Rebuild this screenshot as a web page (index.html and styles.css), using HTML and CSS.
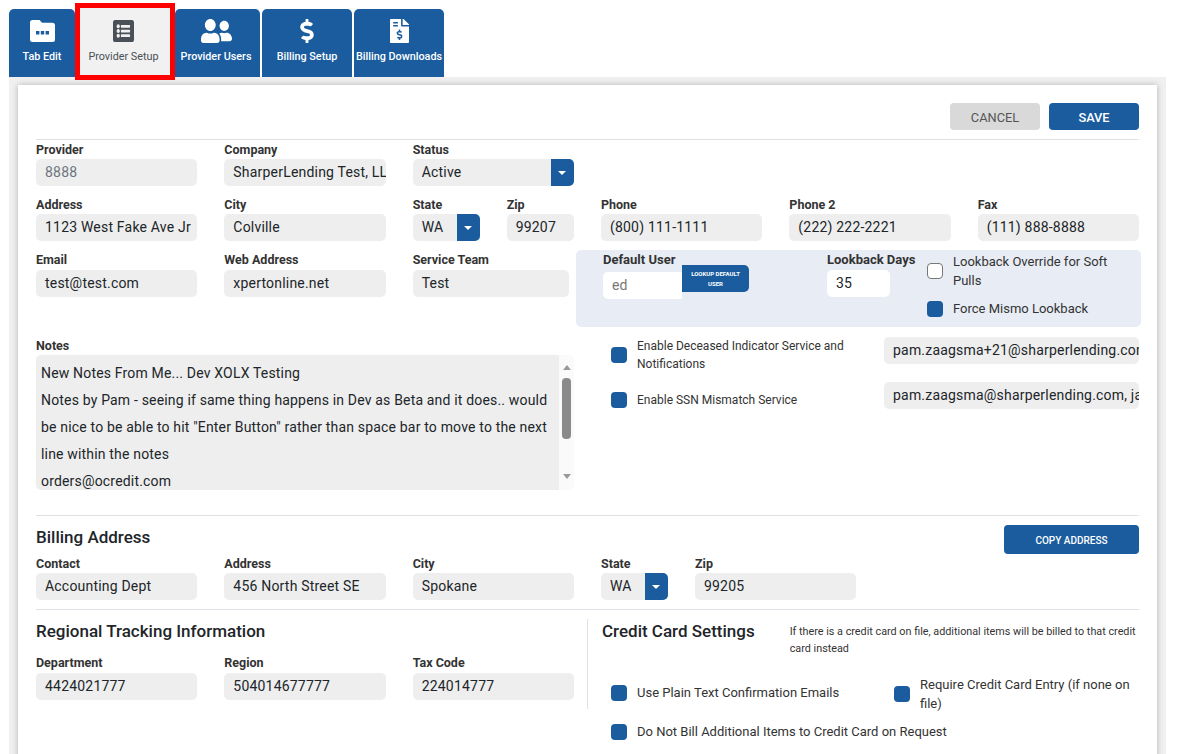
FILE: index.html
```html
<!DOCTYPE html>
<html lang="en">
<head>
  <meta charset="UTF-8" />
  <meta name="viewport" content="width=device-width, initial-scale=1.0"/>
  <title>Provider Setup</title>
  <link rel="stylesheet" href="styles.css">
</head>
<body>

  <nav class="tabs">
    <a class="tab tab-edit">
      <svg class="tab-icon" viewBox="0 0 25 22" width="25" height="24"><path fill-rule="evenodd" d="M2.5 0h7l2.6 2.8h10.4A2.5 2.5 0 0 1 25 5.300v14.200a2.500 2.500 0 0 1-2.500 2.500h-20A2.500 2.500 0 0 1 0 19.500v-17A2.500 2.500 0 0 1 2.500 0zM6 11v3.400h3.400V11zm4.800 0v3.400h3.400V11zm4.800 0v3.400H19V11z"/></svg>
      <span>Tab Edit</span>
    </a>
    <a class="tab tab-active">
      <svg class="tab-icon" viewBox="0 32 512 448" width="21" height="22" preserveAspectRatio="none"><path d="M464 480H48c-26.51 0-48-21.49-48-48V80c0-26.51 21.49-48 48-48h416c26.51 0 48 21.49 48 48v352c0 26.51-21.49 48-48 48zM128 120c-22.091 0-40 17.909-40 40s17.909 40 40 40 40-17.909 40-40-17.909-40-40-40zm0 96c-22.091 0-40 17.909-40 40s17.909 40 40 40 40-17.909 40-40-17.909-40-40-40zm0 96c-22.091 0-40 17.909-40 40s17.909 40 40 40 40-17.909 40-40-17.909-40-40-40zm288-136v-32c0-6.627-5.373-12-12-12H204c-6.627 0-12 5.373-12 12v32c0 6.627 5.373 12 12 12h200c6.627 0 12-5.373 12-12zm0 96v-32c0-6.627-5.373-12-12-12H204c-6.627 0-12 5.373-12 12v32c0 6.627 5.373 12 12 12h200c6.627 0 12-5.373 12-12zm0 96v-32c0-6.627-5.373-12-12-12H204c-6.627 0-12 5.373-12 12v32c0 6.627 5.373 12 12 12h200c6.627 0 12-5.373 12-12z"/></svg>
      <span>Provider Setup</span>
    </a>
    <a class="tab tab-users">
      <svg class="tab-icon" viewBox="0 32 640 448" width="31" height="24" preserveAspectRatio="none"><path d="M192 256c61.9 0 112-50.100 112-112S253.900 32 192 32 80 82.100 80 144s50.100 112 112 112zm76.800 32h-8.300c-20.800 10-43.900 16-68.500 16s-47.600-6-68.500-16h-8.300C51.600 288 0 339.600 0 403.200V432c0 26.500 21.500 48 48 48h288c26.500 0 48-21.500 48-48v-28.800c0-63.600-51.600-115.200-115.200-115.200zM480 256c53 0 96-43 96-96s-43-96-96-96-96 43-96 96 43 96 96 96zm48 32h-3.800c-13.900 4.800-28.600 8-44.200 8s-30.300-3.200-44.200-8H432c-20.400 0-39.200 5.900-55.700 15.400 24.400 26.300 39.700 61.200 39.700 99.800v38.400c0 2.200-.5 4.300-.6 6.400H592c26.500 0 48-21.500 48-48 0-61.900-50.100-112-112-112z"/></svg>
      <span>Provider Users</span>
    </a>
    <a class="tab tab-wide">
      <svg class="tab-icon" viewBox="0 0 288 512" width="14" height="24"><path d="M209.200 233.400l-108-31.600C88.700 198.200 80 186.500 80 173.500c0-16.300 13.200-29.500 29.500-29.500h66.300c12.200 0 24.200 3.700 34.200 10.500 6.100 4.100 14.300 3.100 19.500-2l34.800-34c7.100-6.900 6.100-18.400-1.800-24.500C238 74.800 207.400 64.100 176 64V16c0-8.800-7.200-16-16-16h-32c-8.800 0-16 7.200-16 16v48h-2.500C45.800 64-5.400 118.700.5 183.600c4.200 46.100 39.400 83.600 83.800 96.600l102.500 30c12.500 3.700 21.200 15.300 21.200 28.300 0 16.300-13.200 29.500-29.500 29.500h-66.300C100 368 88 364.300 78 357.500c-6.100-4.100-14.300-3.100-19.500 2l-34.800 34c-7.100 6.900-6.100 18.400 1.800 24.500 24.500 19.200 55.100 29.900 86.500 30v48c0 8.800 7.200 16 16 16h32c8.800 0 16-7.200 16-16v-48.200c46.600-.9 90.300-28.600 105.700-72.700 21.500-61.600-14.600-124.800-72.500-141.700z"/></svg>
      <span>Billing Setup</span>
    </a>
    <a class="tab tab-wide">
      <svg class="tab-icon" viewBox="0 0 384 512" width="19" height="24" preserveAspectRatio="none"><path d="M377 105L279.100 7c-4.500-4.500-10.600-7-17-7H256v128h128v-6.100c0-6.300-2.500-12.400-7-16.900zm-153 31V0H24C10.700 0 0 10.700 0 24v464c0 13.300 10.700 24 24 24h336c13.300 0 24-10.700 24-24V160H248c-13.200 0-24-10.800-24-24zM64 72c0-4.420 3.580-8 8-8h80c4.420 0 8 3.580 8 8v16c0 4.420-3.580 8-8 8H72c-4.420 0-8-3.580-8-8V72zm0 80v-16c0-4.420 3.580-8 8-8h80c4.420 0 8 3.580 8 8v16c0 4.420-3.580 8-8 8H72c-4.420 0-8-3.580-8-8zm144 263.880V440c0 4.420-3.580 8-8 8h-16c-4.420 0-8-3.580-8-8v-24.290c-11.290-.58-22.270-4.520-31.370-11.350-3.900-2.930-4.100-8.770-.57-12.140l11.750-11.210c2.770-2.640 6.890-2.760 10.130-.73 3.870 2.420 8.260 3.720 12.820 3.720h28.110c6.500 0 11.800-5.920 11.800-13.190 0-5.950-3.610-11.190-8.770-12.730l-45-13.500c-18.590-5.580-31.580-23.420-31.580-43.390 0-24.520 19.050-44.440 42.670-45.070V232c0-4.420 3.580-8 8-8h16c4.420 0 8 3.580 8 8v24.290c11.290.58 22.270 4.510 31.370 11.350 3.900 2.930 4.100 8.770.57 12.140l-11.750 11.210c-2.770 2.640-6.890 2.760-10.130.73-3.870-2.430-8.260-3.720-12.820-3.720h-28.110c-6.500 0-11.800 5.920-11.800 13.190 0 5.950 3.610 11.190 8.770 12.730l45 13.500c18.590 5.580 31.580 23.420 31.580 43.390 0 24.530-19.050 44.440-42.670 45.070z"/></svg>
      <span>Billing Downloads</span>
    </a>
  </nav>

  <div class="panel">
    <div class="card">

      <div class="actions">
        <button class="btn btn-cancel">CANCEL</button>
        <button class="btn btn-save">SAVE</button>
      </div>

      <div class="grid grid-top">
        <div class="group"><label>Provider</label><div class="field field-muted">8888</div></div>
        <div class="group"><label>Company</label><div class="field">SharperLending Test, LLC</div></div>
        <div class="group">
          <label>Status</label>
          <div class="select"><span>Active</span><i class="caret"></i></div>
        </div>
      </div>

      <div class="grid">
        <div class="group"><label>Address</label><div class="field">1123 West Fake Ave Jr</div></div>
        <div class="group"><label>City</label><div class="field">Colville</div></div>
        <div class="pair">
          <div class="group"><label>State</label><div class="select"><span>WA</span><i class="caret"></i></div></div>
          <div class="group"><label>Zip</label><div class="field">99207</div></div>
        </div>
        <div class="group"><label>Phone</label><div class="field">(800) 111-1111</div></div>
        <div class="group"><label>Phone 2</label><div class="field">(222) 222-2221</div></div>
        <div class="group"><label>Fax</label><div class="field">(111) 888-8888</div></div>
      </div>

      <div class="grid grid-third">
        <div class="group"><label>Email</label><div class="field">test@test.com</div></div>
        <div class="group"><label>Web Address</label><div class="field">xpertonline.net</div></div>
        <div class="group group-team"><label>Service Team</label><div class="field">Test</div></div>
        <div class="lookback">
          <div class="group default-user">
            <label>Default User</label>
            <div class="lookup">
              <div class="field field-white field-grey-text">ed</div>
              <button class="lookup-btn">LOOKUP DEFAULT USER</button>
            </div>
          </div>
          <div class="group lookback-days">
            <label>Lookback Days</label>
            <div class="field field-white">35</div>
          </div>
          <div class="lookback-checks">
            <div class="check"><i class="box box-empty"></i><span>Lookback Override for Soft Pulls</span></div>
            <div class="check"><i class="box"></i><span>Force Mismo Lookback</span></div>
          </div>
        </div>
      </div>

      <div class="notes-row">
        <div class="group notes">
          <label>Notes</label>
          <div class="notes-box">
            <div class="notes-text">
              <p>New Notes From Me... Dev XOLX Testing</p>
              <p>Notes by Pam - seeing if same thing happens in Dev as Beta and it does.. would be nice to be able to hit "Enter Button" rather than space bar to move to the next line within the notes</p>
              <p>orders@ocredit.com</p>
            </div>
            <div class="scrollbar">
              <i class="arrow-up"></i>
              <i class="thumb"></i>
              <i class="arrow-down"></i>
            </div>
          </div>
        </div>
        <div class="services">
          <div class="service">
            <div class="check check-small"><i class="box"></i><span>Enable Deceased Indicator Service and Notifications</span></div>
            <div class="field">pam.zaagsma+21@sharperlending.com</div>
          </div>
          <div class="service">
            <div class="check check-small"><i class="box"></i><span>Enable SSN Mismatch Service</span></div>
            <div class="field">pam.zaagsma@sharperlending.com, jane.doe@sharperlending.com</div>
          </div>
        </div>
      </div>

      <section class="billing">
        <div class="billing-head">
          <h2>Billing Address</h2>
          <button class="btn btn-copy">COPY ADDRESS</button>
        </div>
        <div class="grid">
          <div class="group"><label>Contact</label><div class="field">Accounting Dept</div></div>
          <div class="group"><label>Address</label><div class="field">456 North Street SE</div></div>
          <div class="group"><label>City</label><div class="field">Spokane</div></div>
          <div class="pair">
            <div class="group"><label>State</label><div class="select"><span>WA</span><i class="caret"></i></div></div>
            <div class="group group-zip"><label>Zip</label><div class="field">99205</div></div>
          </div>
        </div>
      </section>

      <section class="bottom">
        <div class="regional">
          <h2>Regional Tracking Information</h2>
          <div class="regional-grid">
            <div class="group"><label>Department</label><div class="field">4424021777</div></div>
            <div class="group"><label>Region</label><div class="field">504014677777</div></div>
            <div class="group"><label>Tax Code</label><div class="field">224014777</div></div>
          </div>
        </div>
        <div class="credit">
          <div class="credit-head">
            <h2>Credit Card Settings</h2>
            <p>If there is a credit card on file, additional items will be billed to that credit card instead</p>
          </div>
          <div class="credit-checks">
            <div class="check"><i class="box"></i><span>Use Plain Text Confirmation Emails</span></div>
            <div class="check"><i class="box"></i><span>Require Credit Card Entry (if none on file)</span></div>
            <div class="check check-wide"><i class="box"></i><span>Do Not Bill Additional Items to Credit Card on Request</span></div>
          </div>
        </div>
      </section>

    </div>
  </div>

</body>
</html>
```

FILE: styles.css
```css
* {
  box-sizing: border-box;
}

body {
  margin: 0;
  height: 754px;
  overflow: hidden;
  background: #fff;
  font-family: 'Roboto', sans-serif;
  color: #212529;
}

/* Tabs */
.tabs {
  display: flex;
  padding: 9px 0 0 9px;
  height: 77px;
}

.tab {
  display: flex;
  flex-direction: column;
  align-items: center;
  width: 90px;
  margin-right: 2px;
  background: #1a5c9e;
  color: #fff;
  border-radius: 5px 5px 0 0;
  font-size: 10.800px;
  font-weight: 500;
  white-space: nowrap;
}

.tab svg {
  fill: #fff;
}

.tab-icon {
  margin-top: 10px;
  height: 24px;
}

.tab span {
  margin-top: 7px;
}

.tab-edit {
  width: 66px;
  margin-right: 0;
}

.tab-users {
  width: 85px;
  padding-right: 3px;
}

.tab-active {
  position: relative;
  width: 100px;
  margin: -6px 0 -3px;
  padding-right: 3px;
  background: #f1f1f1;
  border: 5px solid #f00;
  border-radius: 0;
  color: #495057;
  font-weight: 400;
  z-index: 1;
}

.tab-active svg {
  fill: #495057;
  height: 22px;
  margin-top: 12px;
}

.tab-active span {
  margin-top: 8px;
}

/* Panel */
.panel {
  margin: 0 11px 0 9px;
  height: 677px;
  padding: 8px 9px 0;
  background: #f0f0f0;
}

.card {
  height: 700px;
  padding: 18px 18px 0;
  background: #fff;
  box-shadow: 0 0 6px rgba(0, 0, 0, 0.25);
}

.actions {
  display: flex;
  justify-content: flex-end;
  gap: 9px;
  height: 37px;
  border-bottom: 1px solid #dee2e6;
}

.btn {
  height: 27px;
  width: 90px;
  padding: 1px 0 0;
  border: none;
  border-radius: 4px;
  font-family: 'Roboto', sans-serif;
  font-size: 12.800px;
  font-weight: 500;
  color: #fff;
  background: #1a5c9e;
}

.btn-cancel {
  background: #d9d9d9;
  color: #555;
  font-weight: 400;
}

/* Fields */
.grid {
  display: grid;
  grid-template-columns: repeat(6, 1fr);
  column-gap: 27px;
  height: 55px;
}

.grid-top {
  margin-top: 2px;
}

.group {
  display: flex;
  flex-direction: column;
  min-width: 0;
}

.group label {
  font-size: 12.500px;
  font-weight: 700;
  line-height: 16px;
  margin-bottom: 1px;
  color: #333;
}

.field {
  height: 27px;
  padding: 0 9px;
  border-radius: 5px;
  background: #eee;
  font-size: 14px;
  letter-spacing: 0.2px;
  line-height: 27px;
  color: #212529;
  white-space: nowrap;
  overflow: hidden;
}

.field-muted {
  color: #6c757d;
}

.field-white {
  background: #fff;
}

.field-grey-text {
  color: #777;
}

.select {
  display: flex;
  justify-content: space-between;
  height: 27px;
  padding-left: 9px;
  border-radius: 5px;
  background: #eee;
  font-size: 14px;
  letter-spacing: 0.2px;
  line-height: 27px;
  overflow: hidden;
}

.caret {
  position: relative;
  width: 23px;
  background: #1a5c9e;
}

.caret::after {
  content: '';
  position: absolute;
  left: 7px;
  top: 12px;
  border-style: solid;
  border-width: 4px 4px 0;
  border-color: #fff transparent transparent;
}

.pair {
  display: grid;
  grid-template-columns: 67px 67px;
  column-gap: 27px;
}

/* Lookback box */
.grid-third {
  height: 76px;
}

.grid-third > .group label {
  margin-bottom: 2px;
}

.grid-third .group-team {
  width: 156px;
}

.lookback {
  grid-column: 4 / 7;
  display: flex;
  height: 77px;
  margin: -2px -2px 0 -25px;
  padding: 2px 8px 0 27px;
  border-radius: 5px;
  background: #e8edf5;
}

.lookback .group label {
  font-size: 13px;
}

.default-user {
  width: 224px;
}

.lookup {
  display: flex;
  align-items: flex-start;
  margin-top: 3px;
}

.lookup .field {
  width: 79px;
  flex: none;
  border-radius: 5px 0 0 5px;
}

.lookup-btn {
  width: 67px;
  height: 27px;
  margin-top: -7px;
  padding: 0 4px;
  border: none;
  border-radius: 0 5px 5px 0;
  background: #1a5c9e;
  color: #fff;
  font-family: 'Roboto', sans-serif;
  font-size: 6px;
  font-weight: 700;
  line-height: 10px;
}

.lookback-days {
  width: 100px;
  white-space: nowrap;
}

.lookback-days .field {
  width: 63px;
  margin-top: 1px;
}

.lookback-checks {
  display: flex;
  flex-direction: column;
  gap: 9px;
  flex: 1;
}

.check {
  display: flex;
  align-items: center;
  font-size: 13px;
  line-height: 19px;
  color: #333;
}

.check span {
  margin-left: 10px;
}

.box {
  flex: none;
  width: 16px;
  height: 16px;
  border-radius: 4px;
  background: #1a5c9e;
}

.box-empty {
  background: #fff;
  border: 1px solid #777;
}

/* Notes */
.notes-row {
  display: grid;
  grid-template-columns: 538px 1fr;
  column-gap: 37px;
  margin-top: 10px;
  padding-bottom: 25px;
  border-bottom: 1px solid #dee2e6;
}

.notes-box {
  display: flex;
  height: 135px;
  border-radius: 5px;
  overflow: hidden;
}

.notes-text {
  flex: 1;
  padding: 5px;
  background: #eee;
  font-size: 14px;
  letter-spacing: 0.175px;
  line-height: 27px;
  overflow: hidden;
}

.notes-text p {
  margin: 0;
}

.scrollbar {
  display: flex;
  flex-direction: column;
  align-items: center;
  flex: none;
  width: 15px;
  background: #fafafa;
}

.arrow-up {
  margin-top: 10px;
  border-style: solid;
  border-width: 0 4px 5px;
  border-color: transparent transparent #999;
}

.thumb {
  width: 9px;
  height: 61px;
  margin-top: 8px;
  border-radius: 4px;
  background: #8a8a8a;
}

.arrow-down {
  margin-top: 35px;
  border-style: solid;
  border-width: 5px 4px 0;
  border-color: #999 transparent transparent;
}

.services {
  display: flex;
  flex-direction: column;
  gap: 9px;
  margin-top: -1px;
}

.service {
  display: grid;
  grid-template-columns: 265px 1fr;
  align-items: start;
  column-gap: 8px;
  min-height: 36px;
}

.service .field {
  line-height: 26px;
}

.check-small {
  font-size: 12px;
  line-height: 18px;
  align-self: center;
}

/* Billing */
.billing {
  padding-bottom: 9px;
  border-bottom: 1px solid #dee2e6;
}

.billing-head {
  display: flex;
  justify-content: space-between;
  align-items: flex-start;
  height: 40px;
  padding-top: 9px;
}

h2 {
  margin: 0;
  font-size: 17px;
  font-weight: 500;
  color: #212529;
  white-space: nowrap;
}

.billing-head h2 {
  margin-top: 2px;
}

.btn-copy {
  width: 135px;
  height: 29px;
  font-size: 10px;
}

.billing .grid {
  height: 44px;
}

.billing .pair {
  grid-column: 4 / 7;
  grid-template-columns: 67px 161px;
}

/* Regional + credit card */
.bottom {
  display: grid;
  grid-template-columns: 552px 1fr;
  margin-top: 9px;
}

.bottom h2 {
  padding-top: 2px;
}

.regional {
  height: 90px;
  padding-right: 13px;
  border-right: 1px solid #dee2e6;
}

.regional-grid {
  display: grid;
  grid-template-columns: repeat(3, 1fr);
  column-gap: 27px;
  margin-top: 14px;
}

.regional-grid label {
  margin-bottom: 2px;
}

.credit {
  padding-left: 14px;
}

.credit-head {
  display: flex;
  align-items: flex-start;
}

.credit-head p {
  margin: 4px 0 0 35px;
  font-size: 10.800px;
  line-height: 17px;
  color: #333;
}

.credit-checks {
  display: grid;
  grid-template-columns: 283px 1fr;
  row-gap: 9px;
  align-items: center;
  margin-top: 18px;
  padding-left: 9px;
}

.credit-checks .check:first-child {
  margin-top: -3px;
}

.check-wide {
  grid-column: 1 / 3;
}
```
